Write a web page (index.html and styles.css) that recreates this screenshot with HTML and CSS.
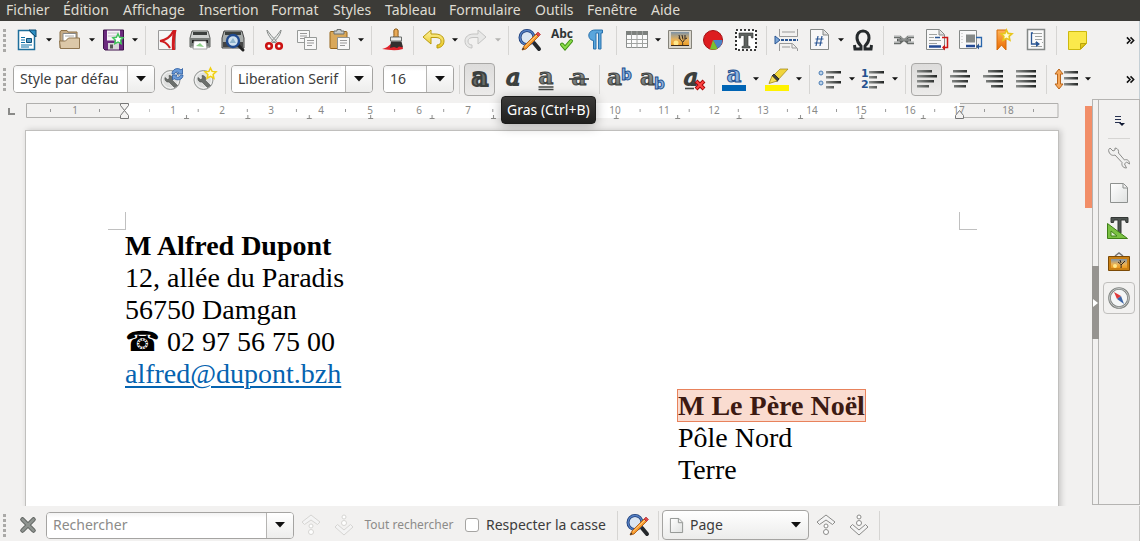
FILE: index.html
```html
<!DOCTYPE html>
<html lang="fr">
<head>
<meta charset="utf-8">
<title>Traitement de texte</title>
<link rel="stylesheet" href="styles.css">
</head>
<body>
<svg class="defs" aria-hidden="true">
  <defs>
    <linearGradient id="ink" x1="0" y1="0" x2="0" y2="1"><stop offset="0" stop-color="#a4a8a5"/><stop offset="1" stop-color="#666b68"/></linearGradient>
    <linearGradient id="bar" x1="0" y1="0" x2="1" y2="0"><stop offset="0" stop-color="#8b8e8c"/><stop offset="1" stop-color="#222524"/></linearGradient>
    <linearGradient id="sunset" x1="0" y1="0" x2="0" y2="1"><stop offset="0" stop-color="#7d93a8"/><stop offset=".55" stop-color="#e8b25a"/><stop offset="1" stop-color="#ee9a1c"/></linearGradient>
    <linearGradient id="gold" x1="0" y1="0" x2="0" y2="1"><stop offset="0" stop-color="#fff3a0"/><stop offset="1" stop-color="#e8c51c"/></linearGradient>
    <linearGradient id="orange" x1="0" y1="0" x2="0" y2="1"><stop offset="0" stop-color="#ffb25a"/><stop offset="1" stop-color="#ea6a00"/></linearGradient>
    <linearGradient id="sheet" x1="0" y1="0" x2="1" y2="1"><stop offset="0" stop-color="#fff"/><stop offset="1" stop-color="#dfe1e0"/></linearGradient>
  </defs>
  <symbol id="i-find" viewBox="0 0 24 24"><path d="M16 15l5 6" stroke="#25282c" stroke-width="4" stroke-linecap="round"/><circle cx="9" cy="9.500" r="7" fill="#dbe6f2" stroke="#1c3c78" stroke-width="3"/><circle cx="9" cy="9.500" r="7" fill="none" stroke="#5580c4" stroke-width="1.400"/><path d="M4 22l2-4L18 6l2.500 2.500L8 21z" fill="#f79a2c" stroke="#a6520a" stroke-width=".8"/><path d="M7 18.500L19 7" stroke="#ffd08a"/><path d="M18 6l2-2 2.500 2.500-2 2z" fill="#e0474a" stroke="#a22" stroke-width=".6"/><path d="M4 22l1-2.500 1.500 1.500z" fill="#333"/></symbol>
  <symbol id="i-gear" viewBox="0 0 24 24"><circle cx="10.500" cy="13" r="9.500" fill="#dedfde" stroke="#929593"/><circle cx="10.500" cy="13" r="8" fill="none" stroke="#f6f6f6"/><path d="M14.500 20.500L9 15c-3 .5-4.500-2-4-4.500l2.500 2 2-1-.5-3c3 0 4.500 2.500 3.500 5l5 5z" fill="#6b6f6c" stroke="#4a4e4b" stroke-width=".6"/></symbol>
  <symbol id="i-tree" viewBox="0 0 24 24"><path d="M3 5h18v14H3z" fill="url(#sunset)"/><circle cx="8" cy="16" r="2.500" fill="#ffe88b"/><path d="M14.500 19c.5-4 0-5-4-8m4.500 4c1-2 2-3 4-4m-4 1.500L14 8m-2 4l-1-4m6 4V8" fill="none" stroke="#2b2320"/><path d="M3 18h18v1H3z" fill="#3b2a18"/></symbol>
  <symbol id="i-up" viewBox="0 0 20 24"><path d="M10 2l9 7-2.500 2.500L10 7l-6.500 4.500L1 9z" fill="#f4f4f4" stroke="currentColor"/><circle cx="10" cy="13" r="2" fill="#fff" stroke="currentColor"/><circle cx="10" cy="19" r="2.500" fill="#fff" stroke="currentColor"/></symbol>
  <symbol id="i-down" viewBox="0 0 20 24"><circle cx="10" cy="4" r="2" fill="#fff" stroke="currentColor"/><circle cx="10" cy="10" r="2.500" fill="#fff" stroke="currentColor"/><path d="M10 22l9-8-2.500-2.500L10 17l-6.500-5.500L1 14z" fill="#f4f4f4" stroke="currentColor"/></symbol>
  <symbol id="i-more" viewBox="0 0 10 10"><path d="M1 1.500L4.500 5 1 8.500M5 1.500L8.500 5 5 8.500" fill="none" stroke="#111" stroke-width="1.700"/></symbol>
  <symbol id="i-caret" viewBox="0 0 10 6"><path d="M0 0h10L5 5.500z" fill="currentColor"/></symbol>
</svg>

<nav class="menubar" aria-label="Menu principal">
  <button>Fichier</button><button>Édition</button><button>Affichage</button><button>Insertion</button><button>Format</button><button>Styles</button><button>Tableau</button><button>Formulaire</button><button>Outils</button><button>Fenêtre</button><button>Aide</button>
</nav>

<div class="toolbar standard" role="toolbar" aria-label="Standard">
  <span class="grip"></span>
  <button class="tool split" aria-label="Nouveau"><svg viewBox="0 0 24 24"><path d="M3.500 2.500h11l5 5v14h-16z" fill="#fff" stroke="#1f6f9c" stroke-width="1.500"/><path d="M14 2h7v7z" fill="#2d8fc4" stroke="#114c70"/><path d="M6 9.500h4m-4 2.500h4m-4 2.500h4M6 17h11M6 19h8" stroke="#0d70a7" stroke-width="1.200"/><path d="M11.500 10.500h5v4h-5z" fill="#5599c4" stroke="#0b5078"/></svg></button><button class="drop" aria-label="Modèles"><svg><use href="#i-caret"/></svg></button>
  <button class="tool split" aria-label="Ouvrir"><svg viewBox="0 0 24 24"><path d="M2 20V4l1-1.500h6L10 4h9v16z" fill="#c5ab86" stroke="#8d7046"/><path d="M5 5.500h13v8H5z" fill="#fff" stroke="#888"/><path d="M7 8h9" stroke="#aaa"/><path d="M1.500 13h6l3-3h11v10.500H2.500z" fill="#dcc8a8" stroke="#907650"/></svg></button><button class="drop" aria-label="Fichiers récents"><svg><use href="#i-caret"/></svg></button>
  <button class="tool split" aria-label="Enregistrer"><svg viewBox="0 0 24 24"><path d="M2.500 2h20v20H4l-1.500-1.500z" fill="#6b2a7e" stroke="#3c1049"/><path d="M6 2.500h13v10H6z" fill="#f6f3f7"/><path d="M7 5h11M7 8h8" stroke="#c7bcca"/><path d="M7 15h11v6.500H7z" fill="#d8d5d9"/><path d="M9 16.500h3v4H9z" fill="#555"/><path d="M17 6l1.600 3.200 3.500.5-2.500 2.500.6 3.500-3.200-1.700-3.200 1.700.6-3.500-2.500-2.500 3.500-.5z" fill="#fff" stroke="#45c45e" stroke-width="1.500"/></svg></button><button class="drop" aria-label="Enregistrer sous"><svg><use href="#i-caret"/></svg></button>
  <span class="sep wide"></span>
  <button class="tool" aria-label="Exporter en PDF"><svg viewBox="0 0 24 24"><path d="M3.500 2.500h17v19h-17z" fill="#f6f6f6" stroke="#9a9a9a"/><path d="M18 2h3.500c-1.500 6-2 13-1.500 20h-3c-.5-7 0-13 1-20z" fill="#cf1b1e"/><path d="M18.500 3C16 8 11 12 5 13c4 0 7 2 10 7" fill="none" stroke="#cf1b1e" stroke-width="2.200"/></svg></button>
  <button class="tool" aria-label="Imprimer"><svg viewBox="0 0 24 24"><path d="M4 3h16l2 7v9H2v-9z" fill="#cfd2d0" stroke="#5c605d"/><path d="M5 4h14v3H5z" fill="#3c403e"/><path d="M2 10h20v8H2z" fill="#777c79"/><path d="M4 12h16v3H4z" fill="#222"/><path d="M6 13h12l1 8H5z" fill="#fff" stroke="#888" stroke-width=".7"/><path d="M8 18l4-3 4 4z" fill="#8fd08a"/></svg></button>
  <button class="tool" aria-label="Aperçu"><svg viewBox="0 0 24 24"><path d="M3 3h18l2 7v10H1V10z" fill="#a9adab" stroke="#444"/><path d="M4 4h16v3H4z" fill="#3c403e"/><path d="M2 14h20v5H2z" fill="#444"/><path d="M17 17l5 5" stroke="#222" stroke-width="3" stroke-linecap="round"/><circle cx="12" cy="13" r="6" fill="#cfe0ee" stroke="#204a90" stroke-width="2.400"/><path d="M8.500 15l3.500-5 3 5z" fill="#8fb3cc"/></svg></button>
  <span class="sep"></span>
  <button class="tool" aria-label="Couper"><svg viewBox="0 0 24 24"><path d="M5 2c0 4 4 9 8 13l1.500-2C10 9 8 6 5 2zM19 2c0 4-4 9-8 13l-1.500-2C14 9 16 6 19 2z" fill="#eceeed" stroke="#858987"/><circle cx="7" cy="18" r="2.800" fill="#fff" stroke="#cc1212" stroke-width="2.600"/><circle cx="17" cy="18" r="2.800" fill="#fff" stroke="#cc1212" stroke-width="2.600"/></svg></button>
  <button class="tool" aria-label="Copier"><svg viewBox="0 0 24 24"><path d="M2.500 2.500h12v12h-12z" fill="#f8f8f8" stroke="#979a98"/><path d="M5 5.500h7M5 8h7m-7 2.500h5" stroke="#999"/><path d="M9.500 9.500h12v12h-12z" fill="#f8f8f8" stroke="#979a98"/><path d="M12 12.500h7M12 15h7m-7 2.500h5" stroke="#999"/></svg></button>
  <button class="tool split" aria-label="Coller"><svg viewBox="0 0 24 24"><rect x="3" y="3.500" width="17" height="17" rx="1" fill="#d9a85a" stroke="#96651a"/><path d="M7 6V3h3V1.500h4V3h3v3z" fill="#c9ccca" stroke="#6d716f"/><path d="M10.500 9.500h12v12h-12z" fill="#f8f8f8" stroke="#8e918f"/><path d="M13 12.500h7M13 15h7m-7 2.500h5" stroke="#999"/></svg></button><button class="drop" aria-label="Collage spécial"><svg><use href="#i-caret"/></svg></button>
  <span class="sep wide"></span>
  <button class="tool" aria-label="Cloner le formatage"><svg viewBox="0 0 24 24"><path d="M1 21c5-1 6-3 9-5l11 1 1 4c-7 2-14 1-21 0z" fill="#e0232b"/><path d="M12.500 9c1-2 0-4 .5-7 1-1.500 3-1.500 4 0 .5 3-.5 5 .5 7z" fill="#e8aa58" stroke="#8d5a14"/><path d="M9.500 9h11v4h-11z" fill="#e9ebea" stroke="#6a6e6c"/><path d="M10 13.500h10.500l1.500 6-4-1-2 1.500-3-1-4 1z" fill="#33302f"/></svg></button>
  <span class="sep"></span>
  <button class="tool split" aria-label="Annuler"><svg viewBox="0 0 24 24"><path d="M2 9l8-7v4h4c6 0 9 3 9 7 0 5-4 7-7 7v-3c3 0 4-2 4-4 0-2-2-3.500-5-3.500h-5V16z" fill="url(#gold)" stroke="#b99b0c"/></svg></button><button class="drop" aria-label="Liste des annulations"><svg><use href="#i-caret"/></svg></button>
  <button class="tool split" disabled aria-label="Rétablir"><svg viewBox="0 0 24 24"><path d="M22 9l-8-7v4h-4c-6 0-9 3-9 7 0 5 4 7 7 7v-3c-3 0-4-2-4-4 0-2 2-3.500 5-3.500h5V16z" fill="#e8e8e7" stroke="#c4c4c3"/></svg></button><button class="drop off" disabled aria-label="Liste des rétablissements"><svg><use href="#i-caret"/></svg></button>
  <span class="sep wide"></span>
  <button class="tool" aria-label="Rechercher et remplacer"><svg><use href="#i-find"/></svg></button>
  <button class="tool" aria-label="Orthographe"><svg viewBox="0 0 24 24"><text x="0" y="10" class="abc">Abc</text><path d="M11 16.500l3 3.500 6-7" fill="none" stroke="#3c8e10" stroke-width="4" stroke-linecap="round"/><path d="M11 16.500l3 3.500 6-7" fill="none" stroke="#8adb4b" stroke-width="2" stroke-linecap="round"/></svg></button>
  <button class="tool" aria-label="Marques de formatage"><svg viewBox="0 0 24 24"><path d="M18.500 2H11C3 2 3 12 9.500 12.500V21h2.500V5h2.500v16H17V5h1.500z" fill="#5aa6dc" stroke="#2a72ad"/></svg></button>
  <span class="sep"></span>
  <button class="tool split" aria-label="Insérer un tableau"><svg viewBox="0 0 24 24"><path d="M2.500 3.500h21v16h-21z" fill="#fbfbfb" stroke="#8c8f8d"/><path d="M2 3h22v4H2z" fill="#7c807d"/><path d="M3 11.500h20M3 15.500h20M7.500 3v17M13 3v17M18.500 3v17" stroke="#a0a3a1"/></svg></button><button class="drop" aria-label="Taille du tableau"><svg><use href="#i-caret"/></svg></button>
  <button class="tool" aria-label="Image"><svg viewBox="0 0 24 24"><path d="M.5 2.500h23v18H.5z" fill="#d9d6cd" stroke="#85837a"/><svg y="-1" width="24" height="25"><use href="#i-tree"/></svg></svg></button>
  <button class="tool" aria-label="Diagramme"><svg viewBox="0 0 24 24"><circle cx="12" cy="12" r="9.500" fill="#dd1c1f" stroke="#a30f12"/><path d="M12 12h9.500c0 4-2 7-5 8.500z" fill="#4b83c4"/><path d="M12 12l4.500 8.500c-2 1.500-5 1.500-7.500.5z" fill="#78c231"/></svg></button>
  <button class="tool" aria-label="Zone de texte"><svg viewBox="0 0 24 24"><path d="M2 2h20v20H2z" fill="#fff" stroke="#000" stroke-width="1.600" stroke-dasharray="2 2"/><path d="M5 5h14v5h-1.500l-.5-2.500h-3V18l2 .5V20H8v-1.500l2-.5V7.500H7L6.500 10H5z" fill="#5e6360" stroke="#333" stroke-width=".6"/></svg></button>
  <span class="sep"></span>
  <button class="tool split" aria-label="Saut de page"><svg viewBox="0 0 24 24"><path d="M5.500 1v7.500h18V1M8 4h13" fill="none" stroke="#999"/><path d="M1 8v8l5-4z" fill="#7aa5d6" stroke="#2a5694"/><path d="M7 12h17" stroke="#2a5694" stroke-width="2" stroke-dasharray="3 1"/><path d="M5.500 23v-7.500h13l5 5V23M8 19h8m2-3v4h5" fill="none" stroke="#999"/></svg></button>
  <button class="tool split" aria-label="Champ"><svg viewBox="0 0 24 24"><path d="M3.500 1.500h13l5 5v15h-18z" fill="#f8f8f8" stroke="#858987"/><path d="M16 2v5h5" fill="#ddd" stroke="#858987"/><path d="M11 8l-2 10m6-10l-2 10M8.500 11h8M7.500 15h8" stroke="#2a5694" stroke-width="1.200"/></svg></button><button class="drop" aria-label="Autres champs"><svg><use href="#i-caret"/></svg></button>
  <button class="tool" aria-label="Caractère spécial"><svg viewBox="0 0 24 24"><path d="M3.500 17l.5 4h6v-3c-3-3-4-5-4-8 0-4 2-7 6-7s6 3 6 7c0 3-1 5-4 8v3h6l.5-4" fill="none" stroke="#25292b" stroke-width="3"/></svg></button>
  <span class="sep"></span>
  <button class="tool" aria-label="Hyperlien"><svg viewBox="0 0 24 24"><path d="M2 9h6l3 3-3 3H2M22 9h-6l-3 3 3 3h6" fill="none" stroke="#6a6e6b" stroke-width="2.600"/><path d="M5 12h14" stroke="#555957" stroke-width="2.600"/><path d="M2 8.500h6l3 3M22 8.500h-6l-3 3M6 12h12M2 14.500h6m8 0h6" fill="none" stroke="#c5c8c6" stroke-width=".8"/></svg></button>
  <button class="tool" aria-label="Note de bas de page"><svg viewBox="0 0 24 24"><path d="M1.500 1.500h13l5 5v15h-18z" fill="#f8f8f8" stroke="#858987"/><path d="M14 2v5h5" fill="#ddd" stroke="#858987"/><path d="M4 6.500h8M4 9.500h5m-5 3h12m-12 3h8" stroke="#a0a3a1"/><path d="M10 9.500h5" stroke="#2a5694" stroke-width="1.500"/><path d="M4 18.500h12" stroke="#234a94" stroke-width="2.500"/><path d="M17 9.500h5.500v10H18" fill="none" stroke="#cc1717" stroke-width="1.500"/><path d="M17 19.500l3-3v6z" fill="#cc1717"/></svg></button>
  <button class="tool" aria-label="Note de fin"><svg viewBox="0 0 24 24"><path d="M1.500 2.500h17v18h-17z" fill="#f8f8f8" stroke="#858987"/><path d="M8 6.500h9v8H8z" fill="#858987"/><path d="M4 5v12" stroke="#b5b5b5" stroke-dasharray="1 2"/><path d="M8 18h9" stroke="#234a94" stroke-width="2.500"/><path d="M18 9.500h5.500v9H20" fill="none" stroke="#2a66ac" stroke-width="1.300"/><path d="M18 18.500l3-3v6z" fill="#2a5694"/></svg></button>
  <button class="tool" aria-label="Repère de texte"><svg viewBox="0 0 24 24"><path d="M6 2h9v20l-4.500-5L6 22z" fill="url(#orange)" stroke="#d66a08"/><path d="M15.500 2l1.600 3.400 3.900.4-2.900 2.600.8 3.800-3.400-1.900-3.400 1.900.8-3.800L10 5.800l3.900-.4z" fill="#fffbd0" stroke="#e8c61c" stroke-width="1.600"/></svg></button>
  <button class="tool" aria-label="Renvoi"><svg viewBox="0 0 24 24"><path d="M3.500 1.500h17v20h-17z" fill="#fafafa" stroke="#858987" stroke-width="1.500"/><path d="M9 5.500h9m-7 3h7m-7 3h7m-7 3h3m4 0h1m-12 4h11" stroke="#a0a3a1"/><path d="M9 5H7.500v11H13" fill="none" stroke="#2a5694" stroke-width="1.300"/><path d="M12 13l4 3-4 3z" fill="#2a5694"/></svg></button>
  <span class="sep"></span>
  <button class="tool" aria-label="Commentaire"><svg viewBox="0 0 24 24"><path d="M3.500 3.500h18v12l-6 6h-12z" fill="#fbe94b" stroke="#cdb90e"/><path d="M21 15.500h-5.500V21z" fill="#e3c81a" stroke="#b9a40c"/></svg></button>
  <button class="more" aria-label="Plus d'outils"><svg><use href="#i-more"/></svg></button>
</div>

<div class="toolbar" role="toolbar" aria-label="Formatage">
  <span class="grip"></span>
  <div class="combo style"><input type="text" value="Style par défau" aria-label="Style de paragraphe"><button aria-label="Choisir un style"><svg><use href="#i-caret"/></svg></button></div>
  <button class="tool" aria-label="Actualiser le style"><svg viewBox="0 0 24 24"><use href="#i-gear"/><path d="M12 7c0-5 6-7 9-4l1.500-1.500V7H17l1.500-1.500c-2-1-4 0-4 1.500zm11 1c0 5-6 6-9 3.500L12.500 13V8H17l-1 1.500c2 1.500 4 .5 4.500-1.500z" fill="#6b9bd8" stroke="#2a5aa0" stroke-width=".8"/></svg></button>
  <button class="tool" aria-label="Nouveau style"><svg viewBox="0 0 24 24"><use href="#i-gear"/><path d="M17.500 1l1.600 3.400 3.900.4-2.900 2.600.8 3.800-3.400-1.900-3.400 1.900.8-3.800L12 4.800l3.900-.4z" fill="#fffbd0" stroke="#f0cf13" stroke-width="1.500"/></svg></button>
  <span class="sep"></span>
  <div class="combo font"><input type="text" value="Liberation Serif" aria-label="Nom de police"><button aria-label="Choisir une police"><svg><use href="#i-caret"/></svg></button></div>
  <div class="combo size"><input type="text" value="16" aria-label="Taille de police"><button aria-label="Choisir une taille"><svg><use href="#i-caret"/></svg></button></div>
  <span class="sep"></span>
  <div class="hint">
    <button class="tool on" aria-pressed="true" aria-describedby="tip" aria-label="Gras"><svg viewBox="0 0 24 24"><text x="12" y="19" class="glyph heavy mid">a</text></svg></button>
    <div class="tooltip" role="tooltip" id="tip">Gras (Ctrl+B)</div>
  </div>
  <button class="tool" aria-label="Italique"><svg viewBox="0 0 24 24"><text x="12" y="18" class="glyph slant mid">a</text></svg></button>
  <button class="tool" aria-label="Souligné"><svg viewBox="0 0 24 24"><text x="12" y="17" class="glyph mid">a</text><path d="M4.500 20h15M4.500 22.500h15" stroke="#444846" stroke-width="1.400"/></svg></button>
  <button class="tool" aria-label="Barré"><svg viewBox="0 0 24 24"><text x="12" y="18" class="glyph mid">a</text><path d="M2 12h20" stroke="#444846" stroke-width="1.800"/></svg></button>
  <span class="sep"></span>
  <button class="tool" aria-label="Exposant"><svg viewBox="0 0 24 24"><text x="-1" y="18" class="glyph">a</text><text x="13" y="13" class="glyph small">b</text></svg></button>
  <button class="tool" aria-label="Indice"><svg viewBox="0 0 24 24"><text x="-1" y="18" class="glyph">a</text><text x="13" y="22" class="glyph small">b</text></svg></button>
  <span class="sep"></span>
  <button class="tool" aria-label="Effacer le formatage"><svg viewBox="0 0 24 24"><text x="2" y="18" class="glyph slant">a</text><path d="M3 21.500h9" stroke="#444846" stroke-width="1.600"/><path d="M14 14l8 8m0-8l-8 8" stroke="#a50808" stroke-width="4"/><path d="M14.500 14.500l7 7m0-7l-7 7" stroke="#f44" stroke-width="2"/></svg></button>
  <span class="sep"></span>
  <button class="tool split" aria-label="Couleur de police"><svg viewBox="0 0 24 24"><text x="12" y="15" class="glyph blue mid">a</text><path d="M0 18h24v6H0z" fill="#0064b4"/></svg></button><button class="drop" aria-label="Autres couleurs"><svg><use href="#i-caret"/></svg></button>
  <button class="tool split" aria-label="Surlignage"><svg viewBox="0 0 24 24"><path d="M0 18h24v6H0z" fill="#fff200"/><path d="M9 8l6-6h8L13 13z" fill="#f0d43c" stroke="#a08511" stroke-width=".7"/><path d="M9 7l5 5-2 2.500L7 9z" fill="#3e413f" stroke="#2b2d2c"/><path d="M7 9l5 5-8 2.500z" fill="#f5df5c" stroke="#a08511" stroke-width=".8"/></svg></button><button class="drop" aria-label="Autres surlignages"><svg><use href="#i-caret"/></svg></button>
  <span class="sep wide"></span>
  <button class="tool split" aria-label="Puces"><svg viewBox="0 0 24 24"><circle cx="3" cy="6" r="2" fill="#bdd3ea" stroke="#4a7db5"/><circle cx="3" cy="16" r="2" fill="#bdd3ea" stroke="#4a7db5"/><path d="M8 4h15v2.500H8zM8 9h8v2.500H8zM8 14h15v2.500H8zM8 19h8v2.500H8z" fill="url(#bar)"/></svg></button><button class="drop" aria-label="Types de puces"><svg><use href="#i-caret"/></svg></button>
  <button class="tool split" aria-label="Numérotation"><svg viewBox="0 0 24 24"><text x="0" y="10" class="digit">1</text><text x="0" y="21" class="digit">2</text><path d="M8 4h15v2.500H8zM8 9h8v2.500H8zM8 14h15v2.500H8zM8 19h8v2.500H8z" fill="url(#bar)"/></svg></button><button class="drop" aria-label="Types de numéros"><svg><use href="#i-caret"/></svg></button>
  <span class="sep wide"></span>
  <button class="tool on" aria-pressed="true" aria-label="Aligner à gauche"><svg viewBox="0 0 24 24"><path d="M2 3h15v2.500H2zM2 8h20v2.500H2zM2 13h17v2.500H2zM2 18h12v2.500H2z" fill="url(#bar)"/></svg></button>
  <button class="tool" aria-label="Centrer"><svg viewBox="0 0 24 24"><path d="M5 3h14v2.500H5zM2 8h20v2.500H2zM4 13h16v2.500H4zM6 18h12v2.500H6z" fill="url(#bar)"/></svg></button>
  <button class="tool" aria-label="Aligner à droite"><svg viewBox="0 0 24 24"><path d="M7 3h15v2.500H7zM2 8h20v2.500H2zM5 13h17v2.500H5zM10 18h12v2.500H10z" fill="url(#bar)"/></svg></button>
  <button class="tool" aria-label="Justifier"><svg viewBox="0 0 24 24"><path d="M2 3h20v2.500H2zM2 8h20v2.500H2zM2 13h20v2.500H2zM2 18h20v2.500H2z" fill="url(#bar)"/></svg></button>
  <span class="sep"></span>
  <button class="tool split" aria-label="Interligne"><svg viewBox="0 0 24 24"><path d="M5 2l4 5H6.500v10H9l-4 5-4-5h2.500V7H1z" fill="#f7a85a" stroke="#b9651a"/><path d="M10 4h14v2.500H10zM10 10h14v2.500H10zM10 16h14v2.500H10z" fill="url(#bar)"/></svg></button><button class="drop" aria-label="Valeurs d'interligne"><svg><use href="#i-caret"/></svg></button>
  <button class="more" aria-label="Plus d'outils"><svg><use href="#i-more"/></svg></button>
</div>

<div class="workspace">
  <main class="canvas">
    <div class="rulerline">
      <svg class="corner" viewBox="0 0 8 8"><path d="M1 0v6h6" fill="none" stroke="#8a8a88" stroke-width="2"/></svg>
      <svg class="ruler" viewBox="0 0 1033 18" aria-label="Règle">
        <defs>
          <pattern id="half" x="73.500" y="0" width="49.100" height="18" patternUnits="userSpaceOnUse"><path d="M.5 6v3" stroke="#999"/></pattern>
          <pattern id="tabs" x="156" y="0" width="61.400" height="18" patternUnits="userSpaceOnUse"><path d="M2 15.500h5M4.500 12v4" stroke="#8a8a88"/></pattern>
        </defs>
        <path d="M99 0h835v15H99z" fill="#fff"/>
        <path d="M99 .5H.5v14H99M934 .5h98v14h-98" fill="none" stroke="#b0afad"/>
        <path d="M24 6h1v3h-1zM73 6h1v3h-1zM958 6h1v3h-1zM1007 6h1v3h-1z" fill="#999"/>
        <path d="M123 0h800v18H123z" fill="url(#half)"/><path d="M156 0h760v18H156z" fill="url(#tabs)"/>
        <g class="nums"><text x="49" y="11">1</text><text x="147" y="11">1</text><text x="196" y="11">2</text><text x="245" y="11">3</text><text x="295" y="11">4</text><text x="344" y="11">5</text><text x="393" y="11">6</text><text x="442" y="11">7</text><text x="589" y="11">10</text><text x="638" y="11">11</text><text x="688" y="11">12</text><text x="737" y="11">13</text><text x="786" y="11">14</text><text x="835" y="11">15</text><text x="884" y="11">16</text><text x="933" y="11">17</text><text x="982" y="11">18</text></g>
        <path d="M94.500 .5h8v2l-4 5-4-5zM94.500 15.500h8v-3l-4-5-4 5zM929.500 15.500h8v-3l-4-5-4 5z" fill="#f4f3f2" stroke="#777"/>
      </svg>
    </div>
    <article class="page">
      <div class="crops"><i class="crop start"></i><i class="crop end"></i></div>
      <address class="sender"><b>M Alfred Dupont</b><br>12, allée du Paradis<br>56750 Damgan<br><span class="phone">☎</span> 02 97 56 75 00<br><a href="mailto:alfred@dupont.bzh">alfred@dupont.bzh</a></address>
      <address class="recipient"><b class="selected">M Le Père Noël</b><br>Pôle Nord<br>Terre</address>
    </article>
  </main>
  <div class="scroll"><span class="thumb"></span></div>
  <div class="splitter"><button aria-label="Masquer le volet latéral"><svg viewBox="0 0 5 8"><path d="M0 0l5 4-5 4z" fill="#fff"/></svg></button></div>
  <aside class="tabs" aria-label="Volet latéral">
    <button class="tab menu" aria-label="Paramètres du volet"><svg viewBox="0 0 24 24"><path d="M8 8.500h6M8 11.500h6M8 14.500h6" stroke="#26304f"/><path d="M12 15h6l-3 3z" fill="#111a33"/></svg></button>
    <hr>
    <button class="tab" aria-label="Propriétés"><svg viewBox="0 0 24 24"><path d="M2 6c-1-2 0-3 1-4l3 3 2-1V2c3 0 4 3 3.500 5l6 7c2-1 5 0 5 4l-3-2-2 2 2 4c-4 0-5-3-4.500-5.500L8 9C6 10 3 9 2 6z" fill="#f1f1f0" stroke="#8c8c8a"/></svg></button>
    <button class="tab" aria-label="Page"><svg viewBox="0 0 24 24"><path d="M3.500 2.500h13l4 4v15h-17z" fill="url(#sheet)" stroke="#8e918f"/><path d="M16 3v4h4" fill="#eee" stroke="#8e918f"/></svg></button>
    <button class="tab" aria-label="Styles"><svg viewBox="0 0 24 24"><path d="M4 1.500h17v5h-2l-.5-2.500H14v13h-3V4H7l-.5 2.500H4z" fill="#4e5451" stroke="#343836"/><path d="M.5 7.500v15h20z" fill="#7ac142" stroke="#3f7f17"/><path d="M4 15v5h6z" fill="#dff0cf" stroke="#3f7f17"/></svg></button>
    <button class="tab" aria-label="Galerie"><svg viewBox="0 0 24 24"><path d="M8 5l4-3 4 3" fill="none" stroke="#777" stroke-width="1.500"/><path d="M1.500 5.500h21v14h-21z" fill="#c98015" stroke="#7c4a06"/><path d="M4 8h16v9H4z" fill="url(#sunset)"/><circle cx="8" cy="15" r="2" fill="#ffe88b"/><path d="M14 17c.5-3 0-4-3-6m3 3l4-4m-4 2l-1-3" fill="none" stroke="#2b2320"/></svg></button>
    <button class="tab on" aria-pressed="true" aria-label="Navigateur"><svg viewBox="0 0 24 24"><circle cx="12" cy="12" r="9.500" fill="#f4f6f7" stroke="#7c807e" stroke-width="2.600"/><circle cx="12" cy="12" r="9.500" fill="none" stroke="#c8cac9"/><path d="M7 6l7 4-4 3z" fill="#e0393b"/><path d="M17 18l-3-8-4 3z" fill="#3c65a6"/></svg></button>
  </aside>
</div>

<form class="findbar" role="search">
  <span class="grip"></span>
  <button type="button" class="tool" aria-label="Fermer"><svg class="cross" viewBox="0 0 24 24"><path d="M6 6l12 12M18 6L6 18" stroke="#595d5a" stroke-width="5" stroke-linecap="round"/><path d="M6 6l12 12M18 6L6 18" stroke="#8e938f" stroke-width="3" stroke-linecap="round"/></svg></button>
  <div class="combo search"><input type="text" placeholder="Rechercher" aria-label="Rechercher"><button type="button" aria-label="Recherches récentes"><svg><use href="#i-caret"/></svg></button></div>
  <button type="button" class="tool nav off" disabled aria-label="Précédent"><svg><use href="#i-up"/></svg></button>
  <button type="button" class="tool nav off" disabled aria-label="Suivant"><svg><use href="#i-down"/></svg></button>
  <button type="button" class="findall" disabled>Tout rechercher</button>
  <label class="case"><input type="checkbox">Respecter la casse</label>
  <span class="sep"></span>
  <button type="button" class="tool" aria-label="Rechercher et remplacer"><svg><use href="#i-find"/></svg></button>
  <span class="sep"></span>
  <div class="picker"><svg class="leaf" viewBox="0 0 16 18"><path d="M1.500 1.500h9l4 4v11h-13z" fill="url(#sheet)" stroke="#8e918f"/><path d="M10 2v4h4" fill="#eee" stroke="#8e918f"/></svg><select aria-label="Naviguer par"><option>Page</option></select><svg class="caret"><use href="#i-caret"/></svg></div>
  <button type="button" class="tool nav" aria-label="Page précédente"><svg><use href="#i-up"/></svg></button>
  <button type="button" class="tool nav" aria-label="Page suivante"><svg><use href="#i-down"/></svg></button>
  <span class="sep"></span>
</form>
</body>
</html>
```
FILE: styles.css
```css
* { box-sizing: border-box; }
body {
  margin: 0;
  height: 100vh;
  display: flex;
  flex-direction: column;
  overflow: hidden;
  background: #f2f1f0;
  color: #3c3c3c;
  font: 14px/20px "Noto Sans", "Open Sans", sans-serif;
}
button, input, select { font: inherit; color: inherit; margin: 0; }
button { border: 0; padding: 0; background: none; }
svg { display: block; }
.defs { position: absolute; width: 0; height: 0; }

.menubar {
  flex: none;
  display: grid;
  grid-template-columns: 57px 60px 76px 72px 62px 52px 64px 86px 52px 64px auto;
  height: 21px;
  padding-left: 6px;
  background: #3c3b37;
  color: #dfdbd2;
}
.menubar button { height: 20px; text-align: left; white-space: nowrap; line-height: 18px; }

.toolbar, .findbar { flex: none; display: flex; align-items: center; }
.toolbar { height: 40px; padding-right: 4px; border-right: 1px solid #c5d0d6; }
.toolbar.standard { height: 38px; }
.grip {
  flex: none;
  width: 3px;
  height: 23px;
  margin: 0 7px 0 3px;
  background: repeating-linear-gradient(#aaa9a7 0 3px, transparent 3px 5px);
}
.standard .grip, .findbar .grip { margin-right: 5px; }
.tool {
  flex: none;
  width: 33px;
  height: 32px;
  display: flex;
  align-items: center;
  justify-content: center;
}
.tool svg { width: 24px; height: 24px; overflow: visible; }
.tool.split { padding-right: 2px; }
.tool.on {
  width: 31px;
  height: 33px;
  margin: 0 1px;
  border: 1px solid #a9a8a6;
  border-radius: 4px;
  background: linear-gradient(#dddcdb, #ecebea);
}
.drop { flex: none; width: 10px; height: 24px; color: #111; }
.drop svg { width: 6px; height: 4px; margin: 0 auto; }
.drop.off { color: #b5b4b2; }
.sep { flex: none; width: 8px; height: 29px; background: linear-gradient(#d6d5d3, #d6d5d3) center / 1px 100% no-repeat; }
.sep.wide { width: 10px; }
.more { margin-left: auto; }
.more svg { width: 9px; height: 9px; }

.combo {
  flex: none;
  display: flex;
  height: 28px;
  border: 1px solid #a5a4a2;
  border-radius: 4px;
  background: #fff;
  overflow: hidden;
}
.combo input { flex: 1; min-width: 0; border: 0; outline: 0; padding: 0 0 0 6px; background: linear-gradient(#f3f3f3, #fff 5px); }
.combo input::placeholder { color: #8c8b89; opacity: 1; }
.combo button { width: 27px; border-left: 1px solid #b5b4b2; background: linear-gradient(#fff, #ededec); color: #111; }
.combo button svg { width: 10px; height: 6px; margin: 0 auto; }
.combo.style { width: 142px; }
.combo.font { width: 142px; margin: 0 10px 0 2px; }
.combo.font input { margin-right: 4px; }
.combo.size { width: 71px; margin-right: 1px; }
.combo.search { width: 248px; height: 27px; margin-left: 2px; }

.glyph { font: bold 23px "DejaVu Serif", serif; fill: url(#ink); stroke: #3c403e; stroke-width: 1px; }
.mid { text-anchor: middle; }
.heavy { font-size: 26px; fill: #686d6a; stroke-width: 2px; }
.slant { font-style: italic; font-weight: normal; stroke-width: 2px; }
.small { font: bold 15px "DejaVu Sans", sans-serif; fill: #8db4e0; stroke: #24508f; }
.blue { fill: #8db4e0; stroke: #24508f; }
.digit { font: bold 11px "DejaVu Sans", sans-serif; fill: #24508f; }
.abc { font: bold 12px "Open Sans", sans-serif; fill: #2e3436; }

.hint { position: relative; z-index: 2; }
.tooltip {
  position: absolute;
  left: 38px;
  top: 33px;
  padding: 4px 5px;
  border: 1px solid #1c1c1b;
  border-radius: 4px;
  background: linear-gradient(#3a3938, #1f1f1e);
  box-shadow: 0 2px 12px rgba(0, 0, 0, .3);
  color: #fff;
  line-height: 18px;
  white-space: nowrap;
}

.workspace { flex: 1; min-height: 0; display: flex; }
.canvas { flex: 1; min-width: 0; padding-top: 3px; overflow: hidden; }
.rulerline { display: flex; height: 28px; }
.corner { flex: none; width: 8px; height: 8px; margin: 6px 10px 0 8px; }
.ruler { flex: none; width: 1033px; height: 18px; margin-top: 1px; }
.nums { font-size: 10px; fill: #8a8a88; text-anchor: middle; }
.page {
  height: 100%;
  margin: 0 26px 0 25px;
  padding: 0 98px 0 99px;
  border: 1px solid #c0bfbd;
  background: #fff;
  box-shadow: 2px 0 6px rgba(0, 0, 0, .18);
  color: #000;
  font: 28px/32px "Liberation Serif", serif;
}
.crops { display: flex; justify-content: space-between; height: 99px; margin: 0 -17px; align-items: flex-end; }
.crop { width: 18px; height: 18px; border-bottom: 1px solid #c0c0c0; }
.crop.start { border-right: 1px solid #c0c0c0; }
.crop.end { border-left: 1px solid #c0c0c0; }
.sender, .recipient { font-style: normal; white-space: nowrap; }
.recipient { margin-left: 553px; }
.sender a { color: #0563b0; text-decoration: underline; text-decoration-thickness: 2px; text-underline-offset: 3px; }
.phone { font-family: "DejaVu Sans", sans-serif; line-height: 1; }
.selected { background: #fadcd0; box-shadow: 0 0 0 1px #e8825c; color: #3c1a12; }

.scroll { flex: none; width: 7px; padding-top: 7px; }
.thumb { display: block; height: 102px; background: #f28e68; }
.splitter {
  flex: none;
  width: 7px;
  margin-bottom: 1px;
  padding-top: 166px;
  border: 1px solid #b5b4b2;
}
.splitter button { width: 7px; height: 73px; margin: 0 -1px; background: #969490; }
.splitter svg { width: 5px; height: 8px; margin-left: 1px; }
.tabs {
  flex: none;
  width: 41px;
  display: flex;
  flex-direction: column;
  align-items: center;
  margin-bottom: 1px;
  padding-top: 4px;
  border: solid #b5b4b2;
  border-width: 1px 1px 1px 0;
}
.tabs hr { width: 22px; margin: 2px 0 3px; border: 0; border-top: 1px solid #d6d5d3; }
.tab { width: 32px; height: 32px; margin-bottom: 3px; display: flex; align-items: center; justify-content: center; }
.tab svg { width: 24px; height: 24px; }
.tab.menu { margin: 0; }
.tab.on { border: 1px solid #c0bfbd; border-radius: 4px; }

.findbar { height: 35px; padding-top: 3px; border-right: 1px solid #c5c4c2; white-space: nowrap; }
.tool .cross { width: 22px; height: 22px; }
.nav { color: #8a8a88; }
.nav svg { width: 20px; height: 24px; }
.nav.off { color: #d6d5d3; }
.findall { width: 90px; margin: 0 11px 0 4px; font-size: 12px; color: #8c8b89; }
.case { display: flex; align-items: center; gap: 7px; width: 148px; }
.case input { appearance: none; width: 14px; height: 14px; border: 1px solid #a5a4a2; border-radius: 3px; background: #fff; }
.picker {
  display: flex;
  align-items: center;
  width: 147px;
  height: 30px;
  padding: 0 7px 0 6px;
  border: 1px solid #a5a4a2;
  border-radius: 4px;
  background: linear-gradient(#fff, #ececeb);
}
.leaf { width: 15px; height: 17px; }
.picker select { flex: 1; min-width: 0; appearance: none; border: 0; outline: 0; padding: 0 0 0 6px; background: none; }
.picker .caret { width: 10px; height: 6px; color: #111; }
```
